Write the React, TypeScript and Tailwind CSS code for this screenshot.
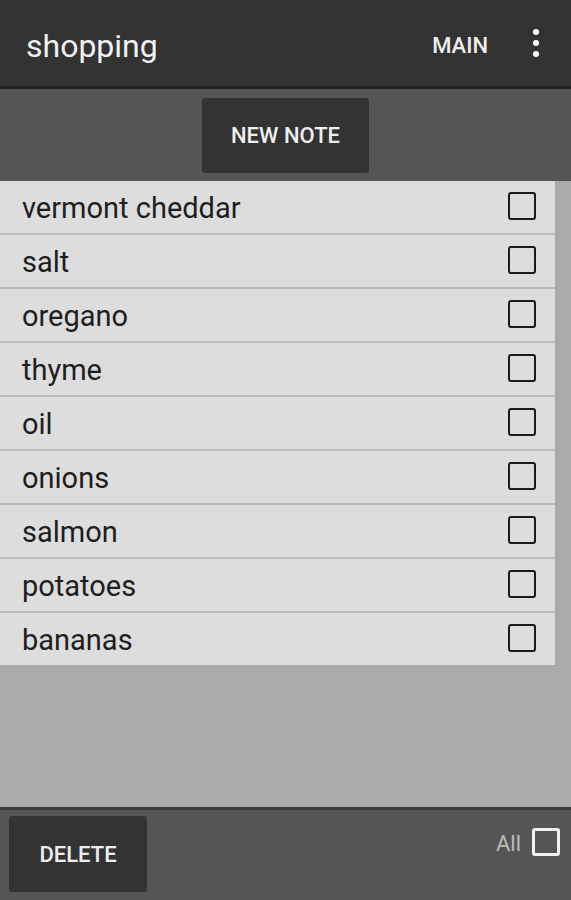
const items = [
  "vermont cheddar",
  "salt",
  "oregano",
  "thyme",
  "oil",
  "onions",
  "salmon",
  "potatoes",
  "bananas",
]

const App = () => {
  return (
    <div
      className="w-[571px] h-[900px] flex flex-col bg-[#aaaaaa] overflow-hidden"
      style={{ fontFamily: "Roboto, 'Liberation Sans', sans-serif" }}
    >
      {/* Action bar */}
      <div className="h-[86px] bg-[#333333] flex items-center pl-[26px] pr-[32px] shrink-0">
        <h1 className="text-[32px] text-[#f2f2f2] flex-1 mt-[6px]">shopping</h1>
        <span className="text-[22px] font-medium text-[#eeeeee] mr-[45px] mt-[5px]">MAIN</span>
        <div className="flex flex-col gap-[5px] items-center">
          <span className="w-[6px] h-[6px] rounded-full bg-white" />
          <span className="w-[6px] h-[6px] rounded-full bg-white" />
          <span className="w-[6px] h-[6px] rounded-full bg-white" />
        </div>
      </div>
      <div className="h-[3px] bg-[#222222] shrink-0" />

      {/* New note bar */}
      <div className="h-[92px] bg-[#555555] flex justify-center pt-[9px] shrink-0">
        <button className="w-[167px] h-[75px] bg-[#333333] rounded-[3px] text-[22px] text-[#eeeeee] font-medium">
          NEW NOTE
        </button>
      </div>

      {/* List */}
      <div className="flex-1 pr-[16px]">
        {items.map((item, i) => (
          <div
            key={item}
            className={
              i < items.length - 1
                ? "h-[54px] bg-[#dddddd] border-b-[2px] border-[#bbbbbb] flex items-center pl-[22px] pr-[19px]"
                : "h-[52px] bg-[#dddddd] flex items-center pl-[22px] pr-[19px]"
            }
          >
            <span className="flex-1 text-[29px] text-[#1e1e1e] mt-[4px]">{item}</span>
            <span className="w-[28px] h-[28px] border-[2.5px] border-[#1a1a1a] rounded-[3px] mb-[2px]" />
          </div>
        ))}
      </div>

      <div className="h-[3px] bg-[#363636] shrink-0" />
      {/* Bottom bar */}
      <div className="h-[90px] bg-[#555555] flex items-start shrink-0 pl-[9px] pr-[11px]">
        <button className="mt-[6px] w-[138px] h-[76px] bg-[#333333] rounded-[3px] text-[22px] text-[#eeeeee] font-medium">
          DELETE
        </button>
        <div className="flex-1" />
        <div className="flex items-center mt-[14px]">
          <span className="text-[22px] text-[#bbbbbb] mr-[11px] mt-[3px]">All</span>
          <span className="w-[28px] h-[28px] border-[3px] border-[#f2f2f2] rounded-[3px]" />
        </div>
      </div>
    </div>
  )
}

export default App
